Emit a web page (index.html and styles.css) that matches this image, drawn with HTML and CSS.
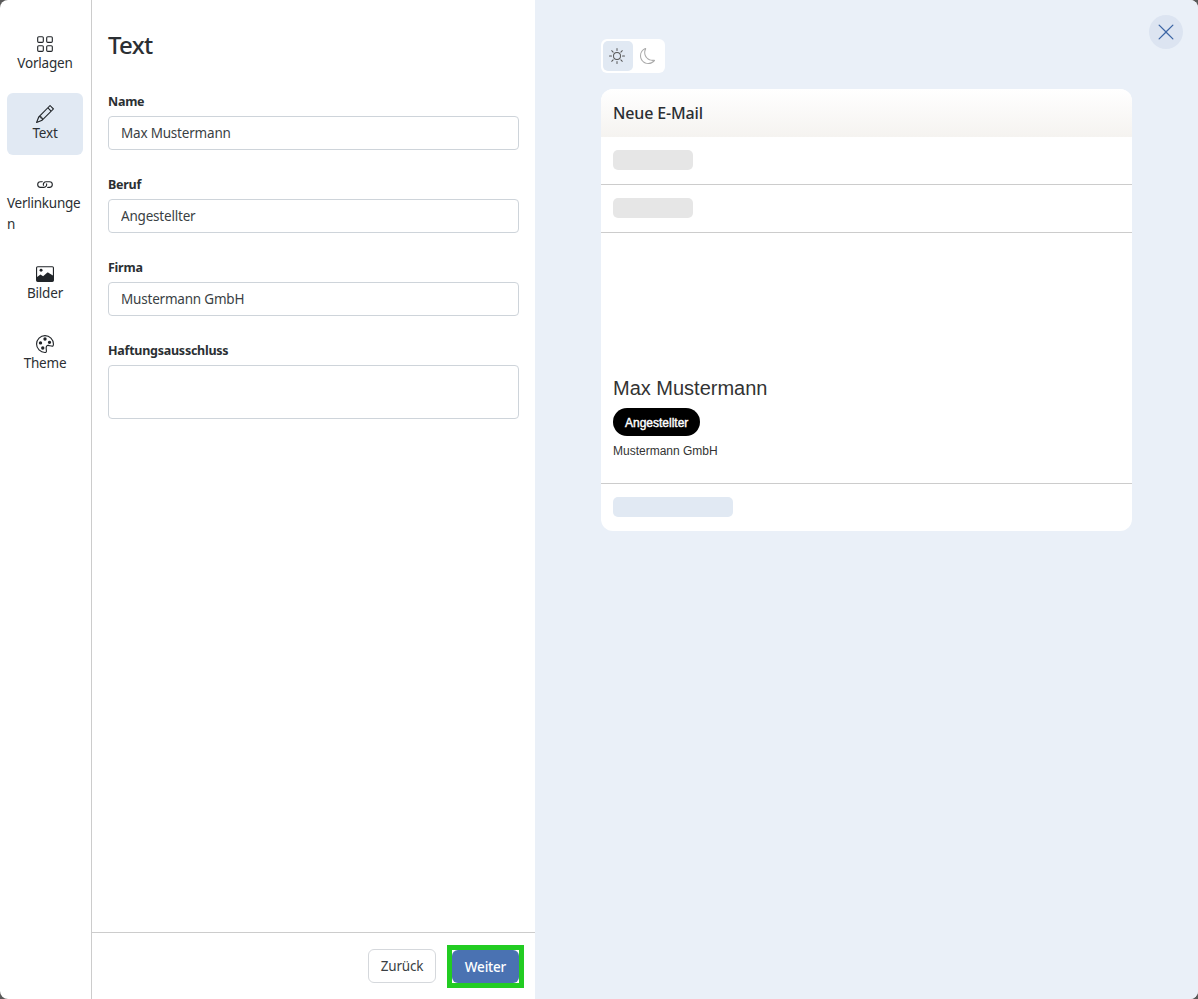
FILE: index.html
```html
<!DOCTYPE html>
<html lang="de">
<head>
<meta charset="utf-8">
<title>Text</title>
<link rel="stylesheet" href="styles.css">
</head>
<body>
<div class="modal">
  <nav class="rail">
    <a class="rail-item">
      <svg class="icon" viewBox="0 0 16 16"><path d="M1 2.5A1.5 1.5 0 0 1 2.5 1h3A1.5 1.5 0 0 1 7 2.5v3A1.5 1.5 0 0 1 5.5 7h-3A1.5 1.5 0 0 1 1 5.5zM2.5 2a.5.5 0 0 0-.5.5v3a.5.5 0 0 0 .5.5h3a.5.5 0 0 0 .5-.5v-3a.5.5 0 0 0-.5-.5zm6.5.5A1.5 1.5 0 0 1 10.5 1h3A1.5 1.5 0 0 1 15 2.5v3A1.5 1.5 0 0 1 13.5 7h-3A1.5 1.5 0 0 1 9 5.5zm1.5-.5a.5.5 0 0 0-.5.5v3a.5.5 0 0 0 .5.5h3a.5.5 0 0 0 .5-.5v-3a.5.5 0 0 0-.5-.5zM1 10.5A1.5 1.5 0 0 1 2.5 9h3A1.5 1.5 0 0 1 7 10.5v3A1.5 1.5 0 0 1 5.5 15h-3A1.5 1.5 0 0 1 1 13.5zm1.5-.5a.5.5 0 0 0-.5.5v3a.5.5 0 0 0 .5.5h3a.5.5 0 0 0 .5-.5v-3a.5.5 0 0 0-.5-.5zm6.5.5A1.5 1.5 0 0 1 10.5 9h3a1.5 1.5 0 0 1 1.5 1.5v3a1.5 1.5 0 0 1-1.5 1.5h-3A1.5 1.5 0 0 1 9 13.5zm1.5-.5a.5.5 0 0 0-.5.5v3a.5.5 0 0 0 .5.5h3a.5.5 0 0 0 .5-.5v-3a.5.5 0 0 0-.5-.5z"/></svg>
      <span>Vorlagen</span>
    </a>
    <a class="rail-item active">
      <svg class="icon" viewBox="0 0 16 16"><path d="M12.146.146a.5.5 0 0 1 .708 0l3 3a.5.5 0 0 1 0 .708l-10 10a.5.5 0 0 1-.168.11l-5 2a.5.5 0 0 1-.65-.65l2-5a.5.5 0 0 1 .11-.168zM11.207 2.5 13.5 4.793 14.793 3.5 12.5 1.207zm1.586 3L10.5 3.207 4 9.707V10h.5a.5.5 0 0 1 .5.5v.5h.5a.5.5 0 0 1 .5.5v.5h.293zm-9.761 5.175-.106.106-1.528 3.821 3.821-1.528.106-.106A.5.5 0 0 1 5 12.5V12h-.5a.5.5 0 0 1-.5-.5V11h-.5a.5.5 0 0 1-.468-.325"/></svg>
      <span>Text</span>
    </a>
    <a class="rail-item">
      <svg class="icon" viewBox="0 0 16 16"><path d="M6.354 5.5H4a3 3 0 0 0 0 6h3a3 3 0 0 0 2.83-4H9q-.13 0-.25.031A2 2 0 0 1 7 10.5H4a2 2 0 1 1 0-4h1.535c.218-.376.495-.714.82-1z"/><path d="M9 5.5a3 3 0 0 0-2.83 4h1.098A2 2 0 0 1 9 6.5h3a2 2 0 1 1 0 4h-1.535a4 4 0 0 1-.82 1H12a3 3 0 1 0 0-6z"/></svg>
      <span class="wrap">Verlinkungen</span>
    </a>
    <a class="rail-item">
      <svg class="icon" viewBox="0 0 16 16"><path fill-rule="evenodd" d="M1.5 1h13A1.5 1.5 0 0 1 16 2.5v11a1.500 1.500 0 0 1-1.500 1.500h-13A1.500 1.500 0 0 1 0 13.500v-11A1.500 1.500 0 0 1 1.500 1zM1.500 2a.5.5 0 0 0-.5.500v8.200l2.700-2.100a.5.5 0 0 1 .6 0l2 1.400 3.800-3.300a.5.5 0 0 1 .6-.05L15 9.300V2.500a.5.5 0 0 0-.5-.5z"/><circle cx="4.500" cy="4.700" r="1.300"/></svg>
      <span>Bilder</span>
    </a>
    <a class="rail-item">
      <svg class="icon" viewBox="0 0 16 16"><path d="M8 5a1.500 1.500 0 1 0 0-3 1.500 1.500 0 0 0 0 3m4 3a1.500 1.500 0 1 0 0-3 1.500 1.500 0 0 0 0 3M5.500 7a1.500 1.500 0 1 1-3 0 1.500 1.500 0 0 1 3 0m.5 6a1.500 1.500 0 1 0 0-3 1.500 1.500 0 0 0 0 3"/><path d="M16 8c0 3.150-1.866 2.585-3.567 2.070C11.420 9.763 10.465 9.473 10 10c-.603.683-.475 1.819-.351 2.920C9.826 14.495 9.996 16 8 16a8 8 0 1 1 8-8m-8 7c.611 0 .654-.171.655-.176.078-.146.124-.464.070-1.119-.014-.168-.037-.370-.061-.591-.052-.464-.112-1.005-.118-1.462-.010-.707.083-1.610.704-2.314.369-.417.845-.578 1.272-.618.404-.038.812.026 1.160.104.343.077.702.186 1.025.284l.028.008c.346.105.658.199.953.266.653.148.904.083.991.024C14.717 9.380 15 9.161 15 8a7 7 0 1 0-7 7"/></svg>
      <span>Theme</span>
    </a>
  </nav>

  <section class="editor">
    <div class="editor-body">
      <h1 class="title">Text</h1>
      <label class="field">
        <span class="field-label">Name</span>
        <input class="input" type="text" value="Max Mustermann">
      </label>
      <label class="field">
        <span class="field-label">Beruf</span>
        <input class="input" type="text" value="Angestellter">
      </label>
      <label class="field">
        <span class="field-label">Firma</span>
        <input class="input" type="text" value="Mustermann GmbH">
      </label>
      <label class="field">
        <span class="field-label">Haftungsausschluss</span>
        <textarea class="input area"></textarea>
      </label>
    </div>
    <footer class="editor-foot">
      <button class="btn btn-back">Zurück</button>
      <span class="focus-ring"><button class="btn btn-next">Weiter</button></span>
    </footer>
  </section>

  <section class="preview">
    <div class="preview-col">
      <div class="mode">
        <span class="mode-btn on">
          <svg class="mode-icon sun" viewBox="0 0 16 16"><path d="M8 11a3 3 0 1 1 0-6 3 3 0 0 1 0 6m0 1a4 4 0 1 0 0-8 4 4 0 0 0 0 8M8 0a.5.5 0 0 1 .5.5v2a.5.5 0 0 1-1 0v-2A.5.5 0 0 1 8 0m0 13a.5.5 0 0 1 .5.5v2a.5.5 0 0 1-1 0v-2A.5.5 0 0 1 8 13m8-5a.5.5 0 0 1-.5.5h-2a.5.5 0 0 1 0-1h2a.5.5 0 0 1 .5.5M3 8a.5.5 0 0 1-.5.5h-2a.5.5 0 0 1 0-1h2A.5.5 0 0 1 3 8m10.657-5.657a.5.5 0 0 1 0 .707l-1.414 1.415a.5.5 0 1 1-.707-.708l1.414-1.414a.5.5 0 0 1 .707 0m-9.193 9.193a.5.5 0 0 1 0 .707L3.05 13.657a.5.5 0 0 1-.707-.707l1.414-1.414a.5.5 0 0 1 .707 0m9.193 2.121a.5.5 0 0 1-.707 0l-1.414-1.414a.5.5 0 0 1 .707-.707l1.414 1.414a.5.5 0 0 1 0 .707M4.464 4.465a.5.5 0 0 1-.707 0L2.343 3.05a.5.5 0 1 1 .707-.707l1.414 1.414a.5.5 0 0 1 0 .708"/></svg>
        </span>
        <span class="mode-btn">
          <svg class="mode-icon moon" viewBox="0 0 16 16"><path d="M6 .278a.77.77 0 0 1 .08.858 7.2 7.2 0 0 0-.878 3.46c0 4.021 3.278 7.277 7.318 7.277q.792-.001 1.533-.16a.79.79 0 0 1 .81.316.73.73 0 0 1-.031.893A8.35 8.35 0 0 1 8.344 16C3.734 16 0 12.286 0 7.71 0 4.266 2.114 1.312 5.124.06A.75.75 0 0 1 6 .278M4.858 1.311A7.27 7.27 0 0 0 1.025 7.71c0 4.02 3.279 7.276 7.319 7.276a7.32 7.32 0 0 0 5.205-2.162q-.506.063-1.029.063c-4.61 0-8.343-3.714-8.343-8.29 0-1.167.242-2.278.681-3.286"/></svg>
        </span>
      </div>
      <article class="mail">
        <header class="mail-head">Neue E-Mail</header>
        <div class="mail-row"><span class="skeleton grey"></span></div>
        <div class="mail-row"><span class="skeleton grey"></span></div>
        <div class="signature">
          <div class="sig-name">Max Mustermann</div>
          <div class="sig-role">Angestellter</div>
          <div class="sig-company">Mustermann GmbH</div>
        </div>
        <div class="mail-foot"><span class="skeleton blue"></span></div>
      </article>
    </div>
    <button class="close" aria-label="Schließen">
      <svg viewBox="0 0 16 16"><path d="M2.146 2.854a.5.5 0 1 1 .708-.708L8 7.293l5.146-5.147a.5.5 0 0 1 .708.708L8.707 8l5.147 5.146a.5.5 0 0 1-.708.708L8 8.707l-5.146 5.147a.5.5 0 0 1-.708-.708L7.293 8z"/></svg>
    </button>
  </section>
</div>
</body>
</html>
```
FILE: styles.css
```css
* { box-sizing: border-box; }
html, body { margin: 0; height: 100%; }
body {
  background: #5a5a5a;
  font-family: "Noto Sans", "Open Sans", sans-serif;
  color: #2b2f33;
  font-size: 13.5px;
  letter-spacing: -0.2px;
  overflow: hidden;
}
.modal {
  display: flex;
  height: 999px;
  width: 1198px;
  background: #fff;
  border-radius: 8px;
  overflow: hidden;
}

/* Left rail */
.rail {
  flex: 0 0 92px;
  border-right: 1px solid #ccc;
  padding: 23px 8px 0 7px;
  display: flex;
  flex-direction: column;
  gap: 8px;
}
.rail-item {
  display: flex;
  flex-direction: column;
  align-items: center;
  padding: 12px 0 11px;
  border-radius: 6px;
  line-height: 21px;
  text-align: center;
}
.rail-item.active { background: #e1e9f3; }
.rail-item .wrap { width: 100%; margin-bottom: -1px; letter-spacing: -0.25px; text-align: left; word-break: break-all; }
.icon {
  width: 18px;
  height: 18px;
  fill: #212529;
  display: block;
}

/* Form column */
.editor {
  flex: 0 0 443px;
  display: flex;
  flex-direction: column;
}
.editor-body {
  flex: 1;
  padding: 29px 16px 0;
}
.title {
  margin: 0 0 32px;
  font-size: 24px;
  line-height: 32px;
  font-weight: 500;
  letter-spacing: -0.7px;
}
.field { display: block; margin-bottom: 26px; }
.field-label {
  display: block;
  font-size: 12.5px;
  font-weight: 700;
  line-height: 17px;
  letter-spacing: -0.25px;
  margin-bottom: 6px;
}
.input {
  display: block;
  width: 411px;
  height: 34px;
  border: 1px solid #ced4da;
  border-radius: 4px;
  padding: 0 12px;
  background: #fff;
  font: inherit;
  letter-spacing: inherit;
  color: #3a3f44;
  outline: 0;
}
.area { height: 54px; resize: none; }
.editor-foot {
  height: 67px;
  border-top: 1px solid #ccc;
  display: flex;
  justify-content: flex-end;
  align-items: flex-start;
  gap: 16px;
  padding: 16px 16px 0 0;
}
.btn {
  border-radius: 6px;
  font: inherit;
  letter-spacing: inherit;
}
.btn-back {
  width: 68px;
  height: 34px;
  background: #fff;
  border: 1px solid #d5d8dc;
  color: #3a3f44;
}
.btn-next {
  width: 67px;
  height: 33px;
  background: #4a72b2;
  border: 0;
  color: #fff;
  font-weight: 500;
  display: block;
}
.focus-ring {
  display: block;
  margin: -4px -5px -5px;
  border: 5px solid #22cc22;
  background: #fff;
}

/* Preview */
.preview {
  flex: 1;
  background: #eaf0f8;
  position: relative;
  padding: 39px 66px 0;
}
.preview-col { display: flex; flex-direction: column; align-items: flex-start; }
.mode {
  display: flex;
  padding: 2px;
  background: #fff;
  border-radius: 6px;
  margin-bottom: 16px;
}
.mode-btn {
  width: 30px;
  height: 30px;
  border-radius: 5px;
  display: flex;
  align-items: center;
  justify-content: center;
}
.mode-btn.on { background: #e1e9f3; padding-right: 2px; }
.mode-icon { width: 16px; height: 16px; display: block; }
.sun { fill: #555; }
.moon { fill: #aaa; }
.mail {
  width: 531px;
  background: #fff;
  border-radius: 12px;
  overflow: hidden;
}
.mail-head {
  height: 48px;
  padding: 0 12px;
  display: flex;
  align-items: center;
  font-size: 16px;
  font-weight: 500;
  letter-spacing: -0.15px;
  background: linear-gradient(#fff, #f5f3f0);
}
.mail-row {
  height: 48px;
  padding: 13px 12px 0;
  border-bottom: 1px solid #ccc;
}
.skeleton { display: block; height: 20px; border-radius: 5px; }
.grey { width: 80px; background: #e6e6e6; }
.blue { width: 120px; background: #e1e9f3; }
.signature {
  height: 251px;
  padding: 143px 12px 0;
  border-bottom: 1px solid #ccc;
  font-family: "Liberation Sans", Arial, sans-serif;
  letter-spacing: 0;
  color: #333;
}
.sig-name { font-size: 20px; line-height: 24px; }
.sig-role {
  display: inline-block;
  margin-top: 8px;
  height: 28px;
  padding: 1px 12px 0;
  line-height: 28px;
  border-radius: 14px;
  background: #000;
  color: #fff;
  font-size: 12px;
  -webkit-text-stroke: 0.4px #fff;
}
.sig-company { margin-top: 7px; font-size: 12px; line-height: 16px; }
.mail-foot { height: 47px; padding: 13px 12px 0; }
.close {
  position: absolute;
  top: 15px;
  right: 15px;
  width: 34px;
  height: 34px;
  padding: 0;
  border: 0;
  border-radius: 50%;
  background: #dce4f1;
  display: flex;
  align-items: center;
  justify-content: center;
}
.close svg { width: 20px; height: 20px; fill: #3d66a5; }
```
